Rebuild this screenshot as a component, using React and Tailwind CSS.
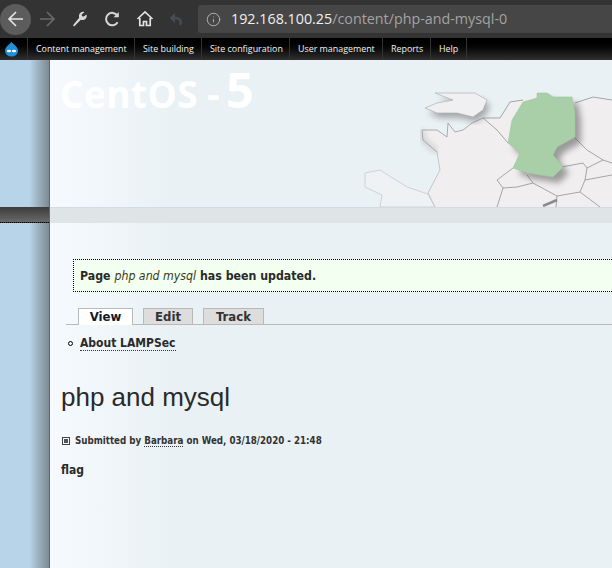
import React from 'react';
import { Info } from 'lucide-react';

const menuItems = [
  { label: 'Content management', width: 'w-[107px]' },
  { label: 'Site building', width: 'w-[67px]' },
  { label: 'Site configuration', width: 'w-[88px]' },
  { label: 'User management', width: 'w-[93px]' },
  { label: 'Reports', width: 'w-[48px]' },
  { label: 'Help', width: 'w-[36px]' },
];

function BrowserBar() {
  return (
    <div className="h-[38px] bg-[#333333] flex items-center">
      <div className="w-[31px] h-[31px] rounded-full bg-[#5c5c5c] flex items-center justify-center">
        <svg width="18" height="18" viewBox="0 0 18 18" fill="none" stroke="#e6e6e6" strokeWidth="1.6">
          <path d="M16 9H2M9 2L2 9l7 7" />
        </svg>
      </div>
      <svg className="ml-[7px]" width="18" height="18" viewBox="0 0 18 18" fill="none" stroke="#6b6b6b" strokeWidth="1.6">
        <path d="M2 9h14M9 2l7 7-7 7" />
      </svg>
      <svg className="ml-[16px]" width="16" height="16" viewBox="0 0 16 16" fill="#d8d8d8">
        <path d="M1 14.2l1.2 1.2 6.6-6.6c1.9.7 3.9.2 5-1.2 1-1.2 1.2-2.7.8-4L11.8 5.4 10 5.2 9.7 3.6 12.5 1C11 .5 9.4.9 8.2 2 7 3.2 6.6 5 7.2 6.7z" />
      </svg>
      <svg className="ml-[15px]" width="18" height="18" viewBox="0 0 18 18" fill="none" stroke="#d8d8d8" strokeWidth="2">
        <path d="M14.6 12.2A6.2 6.2 0 1 1 14.4 5.6" />
        <path d="M15.8 2v5.2h-5.2" fill="#d8d8d8" stroke="none" />
      </svg>
      <svg className="ml-[15px]" width="18" height="18" viewBox="0 0 18 18" fill="none" stroke="#e2e2e2" strokeWidth="1.7">
        <path d="M1.5 9L9 2l7.5 7" />
        <path d="M3.8 8v7.5h3.7v-4h3v4h3.7V8" />
      </svg>
      <svg className="ml-[13px]" width="18" height="16" viewBox="0 0 18 16" fill="none" stroke="#464c52" strokeWidth="2.4">
        <path d="M13 14c2-4 0-7-5-7H4" />
        <path d="M8 2L2.5 7 8 12" fill="#464c52" stroke="none" />
      </svg>
      <div className="ml-[13px] flex-1 h-[28px] bg-[#464646] rounded-l-[3px] flex items-center pl-[8px]">
        <Info size={15} color="#bdbdbd" strokeWidth={1.4} />
        <span className="ml-[10px] text-[14.3px] font-['Open_Sans',sans-serif] whitespace-nowrap text-[#f0f0f0]">
          192.168.100.25<span className="text-[#a3a3a3]">/content/php-and-mysql-0</span>
        </span>
      </div>
    </div>
  );
}

function AdminMenu() {
  return (
    <div className="h-[22px] bg-gradient-to-b from-[#000000] to-[#303030] flex items-center font-['Open_Sans',sans-serif] text-[8.9px] text-[#f2f2f2]">
      <div className="w-[28px] h-full flex items-center justify-center border-r border-[#333333]">
        <svg className="-ml-[5px]" width="15" height="16" viewBox="0 0 15 16">
          <path d="M7.5 0.5C7 3 1 5 1 10a6.5 5.5 0 0 0 13 0C14 5 8 3 7.5 0.5z" fill="#1f8fd6" />
          <ellipse cx="5" cy="10" rx="2.2" ry="1.3" fill="#ffffff" />
          <ellipse cx="10" cy="10" rx="2.2" ry="1.3" fill="#ffffff" />
        </svg>
      </div>
      {menuItems.map((item) => (
        <div key={item.label} className={`${item.width} h-full flex items-center pl-[8px] border-r border-[#333333] whitespace-nowrap`}>
          {item.label}
        </div>
      ))}
    </div>
  );
}

const germany = 'M537 93L547 93 553 97 572 97 575 113 575 137 557 147 553 155 563 167 553 177 527 173 513 168 520 153 508 143 512 120 523 102 537 98z';
const england = 'M425 108L437 113 457 113 473 117 483 110 487 100 475 93 435 93 453 100 437 103z';

function MapArt() {
  return (
    <svg className="absolute right-0 bottom-0" width="272" height="115" viewBox="340 92 272 115">
      <defs>
        <filter id="blur"><feGaussianBlur stdDeviation="3" /></filter>
        <clipPath id="frame"><rect x="340" y="92" width="272" height="115" /></clipPath>
      </defs>
      <g clipPath="url(#frame)">
        {/* land mass */}
        <path d="M365 173L380 170 407 187 428 194 435 207H380L382 195 365 187z" fill="#eef2f5" stroke="#c2c6c8" strokeWidth="0.7" />
        <path d="M483 118L472 123 463 130 455 132 448 123 447 137 437 130 422 130 423 140 437 152 440 170 428 193 435 207H612V100L593 97 575 103 560 97 537 93 523 100 510 102 500 118z" fill="#f1eef0" />
        <path d="M483 118L472 123 463 130 455 132 448 123 447 137 437 130 422 130 423 140 437 152" fill="none" stroke="#8d8d8d" strokeWidth="0.7" />
        <path d="M437 152L440 170 428 193 435 207" fill="none" stroke="#b3b3b3" strokeWidth="0.7" />
        <path d="M422 130L423 140 437 152" fill="none" stroke="#9a9a9a" strokeWidth="2" filter="url(#blur)" />
        {/* england */}
        <path d={england} fill="#777777" opacity="0.6" transform="translate(3 5)" filter="url(#blur)" />
        <path d={england} fill="#f0eff1" stroke="#a8a8a8" strokeWidth="0.6" />
        {/* borders */}
        <path d="M483 118L500 118 510 102 523 100M483 118L497 130 508 143M575 103L593 97 612 100M575 138L587 150 603 160 612 163M562 167L583 163 587 168 603 160M587 168L585 180 612 175M585 180L580 192 557 196 556 207M513 168L497 180 503 188 517 187 533 183 527 175M503 188L497 207M533 183L557 196M580 192L600 207" fill="none" stroke="#858585" strokeWidth="0.7" />
        <path d="M543 206L557 200" stroke="#8a8a8a" strokeWidth="2.5" />
        {/* germany */}
        <path d={germany} fill="#555555" opacity="0.55" transform="translate(6 6)" filter="url(#blur)" />
        <path d={germany} fill="#a8cfa7" stroke="#a0c8a0" strokeWidth="0.6" />
      </g>
    </svg>
  );
}

export default function App() {
  return (
    <div className="w-[612px] h-[568px] overflow-hidden flex flex-col bg-[#e9f1f5] font-['DejaVu_Sans_Condensed','DejaVu_Sans',sans-serif]">
      <BrowserBar />
      <AdminMenu />
      <div className="flex flex-1 min-h-0">
        <div className="w-[50px] flex flex-col border-r border-[#5c6770]">
          <div className="h-[147px] bg-gradient-to-r from-[#b8d4e8] from-[60%] to-[#7d8a94]" />
          <div className="h-[16px] bg-gradient-to-b from-[#3c3c3c] to-[#6a6a6a] border-b border-dotted border-black" />
          <div className="flex-1 bg-gradient-to-r from-[#b8d4e8] from-[60%] to-[#7d8a94]" />
        </div>
        <div className="flex-1 flex flex-col bg-gradient-to-r from-[#f6fafe] to-[#e9f1f5] to-[22%] min-w-0">
          <div className="relative h-[147px]">
            <div className="pl-[10px] pt-[6px] flex items-baseline leading-[46px] font-['Open_Sans',sans-serif] font-bold text-[#ffffff] whitespace-nowrap">
              <span className="text-[37px] tracking-[0.4px]">CentOS</span>
              <span className="ml-[9px] text-[40px]">-</span>
              <span className="ml-[6px] text-[49px]">5</span>
            </div>
            <MapArt />
          </div>
          <div className="h-[16px] bg-[#dfe5e7] border-t border-[#d3dde1]" />
          <div className="pl-[23px] pt-[36px]">
            <div className="h-[33px] -mr-[4px] border border-dotted border-black bg-[#f3fff0] flex items-center pl-[6px] pt-[1px] text-[12.25px] font-bold text-[#2a2a2a] whitespace-nowrap">
              Page&nbsp;<em className="font-normal text-[#3a3a1a]">php and mysql</em>&nbsp;has been updated.
            </div>
          </div>
          <div className="ml-[16px] mt-[16px] h-[17px] flex items-end gap-[10px] border-b border-[#b9b9b9] text-[13px] font-bold">
            <div className="ml-[12px] w-[55px] h-[17px] -mb-px bg-white border border-b-0 border-[#b9b9b9] text-[#111827] flex items-center justify-center">View</div>
            <div className="w-[50px] h-[16px] bg-[#dddddd] border border-[#b9b9b9] border-b-0 text-[#333333] flex items-center justify-center">Edit</div>
            <div className="w-[61px] h-[16px] bg-[#dddddd] border border-[#b9b9b9] border-b-0 text-[#333333] flex items-center justify-center">Track</div>
          </div>
          <div className="ml-[18px] mt-[11px] flex items-center gap-[7px] text-[12px] font-bold text-[#2a2a2a]">
            <span className="w-[5px] h-[5px] rounded-full border border-black" />
            <span className="border-b border-dotted border-[#333333] leading-[14px]">About LAMPSec</span>
          </div>
          <h1 className="ml-[11px] mt-[30px] text-[26px] leading-[32px] text-[#2a2a2a] font-['Liberation_Sans',sans-serif]">php and mysql</h1>
          <div className="ml-[12px] mt-[21px] flex items-center gap-[5px] text-[9.7px] font-bold text-[#333333] whitespace-nowrap">
            <span className="w-[8px] h-[8px] border border-[#444444] flex items-center justify-center">
              <span className="w-[4px] h-[4px] bg-[#555555]" />
            </span>
            <span>
              Submitted by <span className="border-b border-dotted border-[#333333]">Barbara</span> on Wed, 03/18/2020 - 21:48
            </span>
          </div>
          <p className="ml-[11px] mt-[12px] text-[12px] font-bold text-[#2a2a2a]">flag</p>
        </div>
      </div>
    </div>
  );
}
